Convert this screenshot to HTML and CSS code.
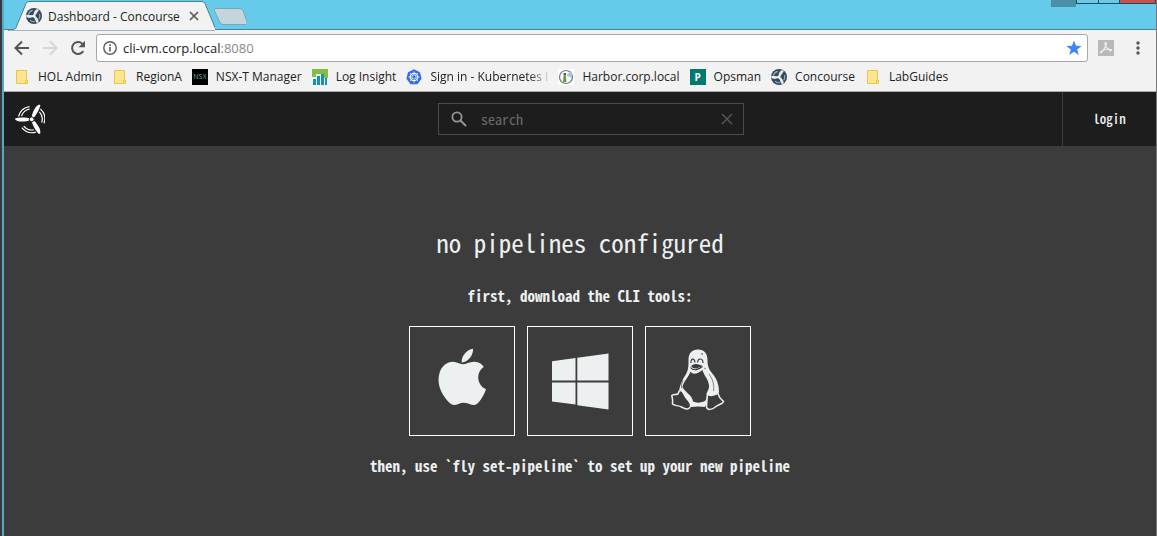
FILE: index.html
```html
<!DOCTYPE html>
<html lang="en">
<head>
<meta charset="utf-8">
<title>Dashboard - Concourse</title>
<link rel="stylesheet" href="styles.css">
</head>
<body>
<svg class="defs" aria-hidden="true">
  <symbol id="concourse" viewBox="0 0 16 16">
    <circle cx="8" cy="8" r="8" fill="#34495e"/>
    <g fill="#e6ebef">
      <path id="blade" d="M7.600 7C7.400 5.500 8.600 1.600 11.200.9l1.600 1C12 3.500 10.500 5.500 9 7.600z"/>
      <use href="#blade" transform="rotate(120 8 8)"/>
      <use href="#blade" transform="rotate(240 8 8)"/>
    </g>
    <path d="M2.400 6.500a6 6 0 0 1 4.300-4.100M13.500 6a6 6 0 0 1-.7 5.200M9 13.700a6 6 0 0 1-5-1.600" fill="none" stroke="#9babb9" stroke-width="1.200"/>
    <circle cx="8" cy="8" r="1.500" fill="#fff"/>
  </symbol>
  <symbol id="folder" viewBox="0 0 16 16">
    <path d="M2.500 1.500h10v10h1v3h-11z" fill="#ffe58f" stroke="#eac54b"/>
    <path d="M11.500 14.500v-3h2" fill="none" stroke="#eac54b"/>
  </symbol>
</svg>

<div class="window">
  <header class="titlebar">
    <div class="tab">
      <svg class="tab-shape" viewBox="0 0 207 31" preserveAspectRatio="none" aria-hidden="true"><path d="M0 29.500h5q2 0 3-2L18 3.500q1-2 3-2H194q2 0 3 2l10 24q1 2 3 2V31H0z" fill="#f2f2f2" stroke="#477f95"/></svg>
      <svg class="icon"><use href="#concourse"/></svg>
      <span class="tab-title">Dashboard - Concourse</span>
      <button class="tab-close" aria-label="Close tab"><svg viewBox="0 0 10 10"><path d="M1 1l8 8M9 1l-8 8" stroke="#5a5a5a" stroke-width="1.700"/></svg></button>
    </div>
    <button class="new-tab" aria-label="New tab"><svg viewBox="0 0 34 18"><path d="M3 .5h24q2 0 3 2l4 11q1 3-1.500 3H10q-2 0-3-2L1.500 3Q.5.500 3 .5z" fill="#c5d5dc" stroke="#78a5b7"/></svg></button>
    <div class="controls"><i class="profile"></i><i class="min"></i><i class="max"></i><i class="close"></i></div>
  </header>

  <nav class="toolbar">
    <button aria-label="Back"><svg viewBox="0 0 16 16"><path d="M15 8H2M8 1.500L1.500 8 8 14.500" fill="none" stroke="#555" stroke-width="2"/></svg></button>
    <button aria-label="Forward"><svg viewBox="0 0 16 16"><path d="M1 8h13M8 1.500L14.500 8 8 14.500" fill="none" stroke="#d6d6d6" stroke-width="2"/></svg></button>
    <button aria-label="Reload"><svg viewBox="0 0 16 16"><path d="M13.300 11A6 6 0 1 1 12.300 3.700L14 5.500" fill="none" stroke="#555" stroke-width="2"/><path d="M15 .8v6.400H8.600z" fill="#555"/></svg></button>
    <div class="omnibox">
      <svg class="info" viewBox="0 0 14 14"><circle cx="7" cy="7" r="6.200" fill="none" stroke="#5a5a5a" stroke-width="1.400"/><path d="M7 6v4.500M7 3.300v1.600" stroke="#5a5a5a" stroke-width="1.600"/></svg>
      <span class="url">cli-vm.corp.local<span class="port">:8080</span></span>
      <button class="star" aria-label="Bookmark"><svg viewBox="0 0 16 16"><path d="M8 .5l2 5.200 5.600.2-4.400 3.500 1.600 5.500L8 11.800l-4.800 3.100 1.600-5.500L.4 5.900 6 5.700z" fill="#4285f4"/></svg></button>
    </div>
    <button class="pdf" aria-label="PDF extension"><svg viewBox="0 0 16 16"><path d="M0 0h16v16H0z" fill="#b9b9b9"/><path d="M7.500 2.500c2 0 .3 5-4.500 10.300-.8.200-1-.6 0-1.300 3.500-2.200 8-3 10.300-1.700 1.200 1.600-2.500 1-4.500-1.800C7 5.500 6.500 3 7.500 2.500z" fill="none" stroke="#f0f0f0" stroke-width="1.200"/></svg></button>
    <button aria-label="Menu"><svg viewBox="0 0 16 16" fill="#555"><circle cx="8" cy="3" r="1.700"/><circle cx="8" cy="8" r="1.700"/><circle cx="8" cy="13" r="1.700"/></svg></button>
  </nav>

  <nav class="bookmarks">
    <a href="#"><svg class="icon"><use href="#folder"/></svg>HOL Admin</a>
    <a href="#"><svg class="icon"><use href="#folder"/></svg>RegionA</a>
    <a href="#"><span class="icon nsx">NSX</span>NSX-T Manager</a>
    <a href="#"><svg class="icon" viewBox="0 0 16 16"><path d="M0 0h16v9H0z" fill="#83bd43"/><path d="M0 8h4V5h8v10H0z" fill="#f1f7f8"/><path d="M1 10h3v6H1zM5 7h3v9H5zM9 5h3v11H9zM13 9h2v7h-2z" fill="#1690b5"/></svg>Log Insight</a>
    <a href="#"><svg class="icon" viewBox="0 0 16 16"><path d="M8 .3l6 2.900 1.600 6.500-4.200 5.500H4.600L.4 9.700 2 3.200z" fill="#326de6"/><circle cx="8" cy="8" r="3.700" fill="none" stroke="#fff" stroke-width="1.200"/><path d="M8 2.500v11M2.500 8h11M4.100 4.100l7.800 7.800M11.900 4.100l-7.800 7.800" stroke="#fff" stroke-width=".8"/><circle cx="8" cy="8" r="1.200" fill="#326de6"/></svg><span class="fade">Sign in - Kubernetes I</span></a>
    <a href="#"><svg class="icon" viewBox="0 0 16 16"><path d="M0 0h16v16H0z" fill="#fff"/><circle cx="8" cy="8" r="6.500" fill="none" stroke="#6e777c" stroke-width="1.200"/><path d="M5 13l.7-7h2l.8 7z" fill="#5c9a3c"/><path d="M5.500 4h2.500v2H5.500z" fill="#466"/><path d="M9 5l5-3v7l-5-2z" fill="#a8c7de"/></svg>Harbor.corp.local</a>
    <a href="#"><span class="icon opsman">P</span>Opsman</a>
    <a href="#"><svg class="icon"><use href="#concourse"/></svg>Concourse</a>
    <a href="#"><svg class="icon"><use href="#folder"/></svg>LabGuides</a>
  </nav>

  <header class="topbar">
    <a class="logo" href="#" aria-label="Concourse"><svg viewBox="0 0 30 30">
      <g id="wing"><path d="M15 16.200C12 17.800 5 18 2.500 17L.3 15.800V14.200C4 13.200 11 13 15 14.500z" fill="#fff"/><path d="M3.500 12.500A13.300 13.300 0 0 1 14.500 2.600M6.500 12A10.600 10.600 0 0 1 14.800 5" fill="none" stroke="#fff" stroke-width="1.200"/></g>
      <use href="#wing" transform="rotate(118 16.700 15.300)"/><use href="#wing" transform="rotate(240 16.700 15.300)"/>
      <circle cx="16.700" cy="15.300" r="2.400" fill="#fff" stroke="#1e1d1d" stroke-width="1"/></svg></a>
    <form class="search">
      <svg class="lens" viewBox="0 0 16 16"><circle cx="6" cy="6" r="4.600" fill="none" stroke="#959595" stroke-width="1.800"/><path d="M9.500 9.500L15 15" stroke="#959595" stroke-width="2"/></svg>
      <input type="text" placeholder="search" aria-label="search">
      <button type="button" class="clear" aria-label="Clear search"><svg viewBox="0 0 12 12"><path d="M1 1l10 10M11 1L1 11" stroke="#595959" stroke-width="1.400"/></svg></button>
    </form>
    <a class="login" href="#">login</a>
  </header>

  <main class="content">
    <h1>no pipelines configured</h1>
    <p>first, download the CLI tools:</p>
    <div class="cards">
      <a href="#" aria-label="macOS"><svg viewBox="-4 4 58 58" fill="#ecf0f1"><path d="M36 .8c.5 6.500-5.300 13.700-11.300 13.600C24 8 30 1.500 36 .8z"/><path d="M25.500 16.300C29 16.300 33 13.500 37.500 13.700c4.500.2 7.500 2.300 9.300 5.200-8 5-7.500 17.500 2.200 22.300-1.700 5-4.500 10-7.500 13.200-4 4.300-7 2.500-10.300 1.200-3.700-1.400-6.500-1.100-9.700.3-4 1.700-7.200 1.500-10.800-3C3.800 45.500-.5 35 2.500 25c2-7 7.500-11 13.500-11.200 3.500-.1 7 2.500 9.500 2.500z"/></svg></a>
      <a href="#" aria-label="Windows"><svg viewBox="0 0 58 58" fill="#ecf0f1"><path d="M1 9.300L24.500 6v22.500H1zM26.300 5.700L57.500 1.500v27H26.300zM1 30.500h23.500v22L1 49.500zM26.300 30.500h31.200v27l-31.200-4.200z"/></svg></a>
      <a href="#" aria-label="Linux"><svg viewBox="-2 1 58 62">
        <path d="M17.500 11C17.500 4 21 .5 27 .5S36.500 4.500 36.500 11c0 7 1.500 9.500 6 15 3.500 4.500 5.500 10 5.500 16.500L47 50 34 57H20L8 42c1-6 3-11 6.500-16 3-4.500 3-9 3-15z" fill="#ecf0f1"/>
        <path d="M19.500 22.500c1.500 3.500 7 2.500 12-1.500 1 5 6 9 6.500 15.500.3 4-2 6-2.300 8.500.5 3.500-.7 7-2.700 7.500-4 1.500-8 1.500-11 0C21.500 47 15.500 44 11.500 38.500 12 33 17.500 28.500 19.500 22.500z" fill="#3d3c3c"/>
        <path d="M38 25q6 8 4.500 17M12 31q-2 4-1.500 8M33 19l2 1" fill="none" stroke="#777" stroke-width=".9"/>
        <path d="M20 14c-.5-5 3.500-5 4-.5M26.500 13.500c.5-5 5.500-4.500 5.500.5" fill="none" stroke="#3d3c3c" stroke-width="1.200"/>
        <path d="M20 17q3-2.500 5.500-2l5.500 1.500q1 1-6 3-3.500 0-5-2.500z" fill="#3d3c3c"/>
        <path d="M19.500 18.500q4 5 12-1" fill="none" stroke="#3d3c3c" stroke-width="1.100"/>
        <circle cx="31" cy="5" r=".8" fill="#3d3c3c"/>
        <path d="M9 41.500c3-.8 3.500 3.500 6 7 2 3 5.500 5.500 4.500 9-2 4-5 2.500-9 .5-3.500-1.700-7.500-1.200-9-3 .3-3 .3-5-.7-8.500 1-1.500 4-.5 6-1.500C7.800 44 7.500 42 9 41.500zM36.500 45c2 2.500 5.500 1.500 9 0 1.500-1 2 .5 2.500 2 1 3 3 3.500 4.500 5.500 0 2-5 3-7.500 5-4 3.500-8.500 4-9.500.5.300-4 .5-8 1-13z" fill="#3d3c3c" stroke="#ecf0f1" stroke-width="1.500"/>
        <path d="M20 54.500q7 2 14 0v3.500q-7-1-14 0z" fill="#ecf0f1"/>
      </svg></a>
    </div>
    <p>then, use `fly set-pipeline` to set up your new pipeline</p>
  </main>
</div>
</body>
</html>
```

FILE: styles.css
```css
* { box-sizing: border-box; }
body { margin: 0; background: #3d3c3c; font-family: "Open Sans", "Noto Sans", sans-serif; font-size: 12px; color: #222; }
button { margin: 0; padding: 0; border: 0; background: none; display: flex; align-items: center; justify-content: center; }
a { color: inherit; text-decoration: none; }
.defs { display: none; }
.window { min-height: 100vh; display: flex; flex-direction: column; border: solid #555; border-width: 0 1px 0 4px; border-image: linear-gradient(to right, #35393b 2px, #56a9c4 2px, #56a9c4 4px, #777 4px) 0 1 0 4; }
.icon { width: 16px; height: 16px; flex: none; }

.titlebar { height: 30px; display: flex; background: #66cbea; border-bottom: 1px solid #477f95; }
.tab { position: relative; display: flex; align-items: center; width: 207px; height: 30px; margin-left: 4px; padding: 2px 16px 0 18px; }
.tab-shape { position: absolute; left: 0; top: 0; width: 100%; height: 31px; }
.tab .icon, .tab-title, .tab-close { position: relative; }
.tab-title { margin-left: 6px; flex: 1; white-space: nowrap; }
.tab-close svg { width: 10px; height: 10px; }
.new-tab { width: 34px; height: 18px; margin: 8px 0 0 -2px; }
.new-tab svg { width: 34px; height: 18px; }
.controls { display: flex; margin-left: auto; align-items: flex-start; }
.controls i { height: 4px; border: 1px solid #264652; border-top: 0; }
.controls .profile { width: 25px; height: 7px; background: #488fa7; border: 0; }
.controls .min { width: 23px; }
.controls .max { width: 21px; border-left: 0; }
.controls .close { width: 36px; background: #c75050; border-left: 0; }

.toolbar { display: flex; align-items: center; height: 36px; padding: 0 10px; gap: 12px; background: #f2f2f2; }
.toolbar button { width: 16px; height: 16px; flex: none; }
.toolbar svg { width: 16px; height: 16px; }
.omnibox { flex: 1; display: flex; align-items: center; height: 28px; padding: 0 5px 0 6px; background: #fff; border: 1px solid #a7a7a7; border-radius: 3px; margin: 0 -2px; }
.omnibox .info { width: 14px; height: 14px; }
.url { flex: 1; margin-left: 6px; font-size: 13px; }
.port { color: #888; }
.toolbar .pdf { margin: 0 4px 0 0; }

.bookmarks { display: flex; align-items: center; height: 26px; padding: 0 10px 4px; gap: 10px; background: #f2f2f2; border-bottom: 1px solid #aaa; white-space: nowrap; }
.bookmarks a { display: flex; align-items: center; gap: 8px; }
.nsx { background: #000; color: #78aaa5; font-size: 7px; line-height: 16px; text-align: center; }
.opsman { background: #007a6e; color: #fff; font-size: 10px; font-weight: 700; line-height: 16px; text-align: center; }
.fade { -webkit-mask-image: linear-gradient(to right, #000 84%, rgba(0, 0, 0, .15)); mask-image: linear-gradient(to right, #000 84%, rgba(0, 0, 0, .15)); }

.topbar, .content { font-family: "Noto Sans CJK JP", "Liberation Mono", monospace; font-feature-settings: "hwid"; font-variant-ligatures: none; color: #ecf0f1; }
.topbar { display: flex; justify-content: space-between; align-items: center; height: 54px; background: #1e1d1d; }
.logo { width: 116px; height: 30px; padding-left: 11px; }
.logo svg { display: block; width: 30px; height: 30px; }
.search { display: flex; align-items: center; width: 306px; height: 32px; margin: 0; padding: 0 10px 0 12px; border: 1px solid #504b4b; }
.lens { width: 16px; height: 16px; flex: none; }
.search input { flex: 1; min-width: 0; margin: 0 0 0 14px; padding: 0; border: 0; outline: 0; background: none; color: #ecf0f1; font: inherit; font-size: 14px; font-feature-settings: "hwid"; }
.search input::placeholder { color: #6c6c6c; }
.clear svg { width: 12px; height: 12px; }
.login { width: 94px; line-height: 54px; border-left: 1px solid #3d3c3c; text-align: center; font-size: 13px; font-weight: 500; }

.content { flex: 1; display: flex; flex-direction: column; align-items: center; background: #3d3c3c; padding-top: 78px; }
h1 { margin: 0 0 26px; font-size: 25px; line-height: 36px; font-weight: 400; }
p { margin: 0; font-size: 15px; line-height: 20px; font-weight: 700; text-align: center; }
.cards { display: flex; gap: 12px; margin: 20px 0; }
.cards a { display: flex; align-items: center; justify-content: center; width: 106px; height: 110px; border: 1px solid #fff; }
.cards svg { width: 58px; height: 62px; overflow: visible; }
```
